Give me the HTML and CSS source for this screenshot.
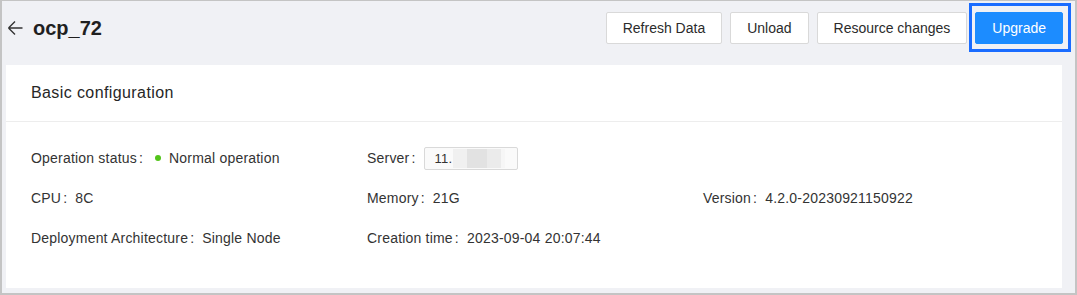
FILE: index.html
```html
<!DOCTYPE html>
<html lang="en">
<head>
    <meta charset="UTF-8">
    <title>ocp_72</title>
    <link rel="stylesheet" href="styles.css">
</head>
<body>
    <div class="frame">
        <div class="page-header">
            <div class="title">
                <svg class="back" width="16" height="16" viewBox="0 0 16 16">
                    <path d="M1.5 8H15.5M1.5 8L8 1.5M1.5 8L8 14.5" fill="none" stroke="#333" stroke-width="1.4"/>
                </svg>
                <h1>ocp_72</h1>
            </div>
            <div class="actions">
                <button class="btn">Refresh Data</button>
                <button class="btn">Unload</button>
                <button class="btn">Resource changes</button>
                <span class="highlight">
                    <button class="btn primary">Upgrade</button>
                </span>
            </div>
        </div>

        <div class="card">
            <div class="card-head">Basic configuration</div>
            <div class="card-body">
                <div class="item">
                    <span class="label">Operation status<span class="colon">:</span></span>
                    <span class="dot"></span>
                    <span>Normal operation</span>
                </div>
                <div class="item">
                    <span class="label">Server<span class="colon">:</span></span>
                    <span class="tag">11.<span class="masked"></span></span>
                </div>
                <div class="item"></div>

                <div class="item"><span class="label">CPU<span class="colon">:</span></span>8C</div>
                <div class="item"><span class="label">Memory<span class="colon">:</span></span>21G</div>
                <div class="item"><span class="label">Version<span class="colon">:</span></span>4.2.0-20230921150922</div>

                <div class="item"><span class="label">Deployment Architecture<span class="colon">:</span></span>Single Node</div>
                <div class="item"><span class="label">Creation time<span class="colon">:</span></span>2023-09-04 20:07:44</div>
                <div class="item"></div>
            </div>
        </div>
    </div>
</body>
</html>
```

FILE: styles.css
```css
body {
    margin: 0;
    font-family: 'Liberation Sans', Arial, sans-serif;
    font-size: 14px;
    color: #333;
}

.frame {
    width: 1077px;
    height: 295px;
    box-sizing: border-box;
    border: solid #c4c4c4;
    border-width: 1px 2px 2px 2px;
    background: #f0f1f5;
    padding: 0 13px 0 4px;
}

.page-header {
    height: 64px;
    display: flex;
    justify-content: space-between;
    align-items: flex-start;
}

.title {
    display: flex;
    align-items: center;
    gap: 10px;
    height: 32px;
    margin-top: 11px;
    padding-left: 1px;
}

.title h1 {
    margin: 0;
    font-size: 20px;
    font-weight: bold;
    color: #1f1f1f;
}

.actions {
    display: flex;
    gap: 8px;
    margin-top: 11px;
    margin-right: -1px;
}

.btn {
    height: 32px;
    padding: 0 16px;
    font-family: inherit;
    font-size: 14px;
    color: #2b2b2b;
    background: #fff;
    border: 1px solid #d9d9d9;
    border-radius: 2px;
}

.btn.primary {
    color: #fff;
    background: #1c8cff;
    border-color: #1c8cff;
}

.highlight {
    position: relative;
}

.highlight::after {
    content: "";
    position: absolute;
    left: -6px;
    top: -9px;
    right: -8px;
    bottom: -8px;
    border: 3px solid #1a6cff;
}

.card {
    background: #fff;
}

.card-head {
    height: 56px;
    line-height: 56px;
    padding: 0 25px;
    font-size: 16px;
    letter-spacing: 0.4px;
    color: #262626;
    border-bottom: 1px solid #ededed;
}

.card-body {
    display: grid;
    grid-template-columns: repeat(3, 336px);
    row-gap: 18px;
    padding: 25px 25px 39px;
}

.item {
    display: flex;
    align-items: center;
    height: 22px;
    color: #333;
    letter-spacing: 0.2px;
    white-space: pre;
}

.colon {
    margin: 0 8px 0 2px;
}

.dot {
    width: 6px;
    height: 6px;
    border-radius: 50%;
    background: #52c41a;
    margin: 0 8px 0 4px;
}

.tag {
    display: inline-flex;
    align-items: center;
    height: 21px;
    width: 82px;
    padding-left: 10px;
    border: 1px solid #d9d9d9;
    border-radius: 2px;
    background: #fafafa;
    font-size: 13px;
}

.masked {
    width: 52px;
    height: 19px;
    margin-left: 1px;
    background: linear-gradient(90deg, #f0f0f0 0 14px, #e2e2e2 14px 34px, #ebebeb 34px 48px, #f6f6f6 48px);
}
```
